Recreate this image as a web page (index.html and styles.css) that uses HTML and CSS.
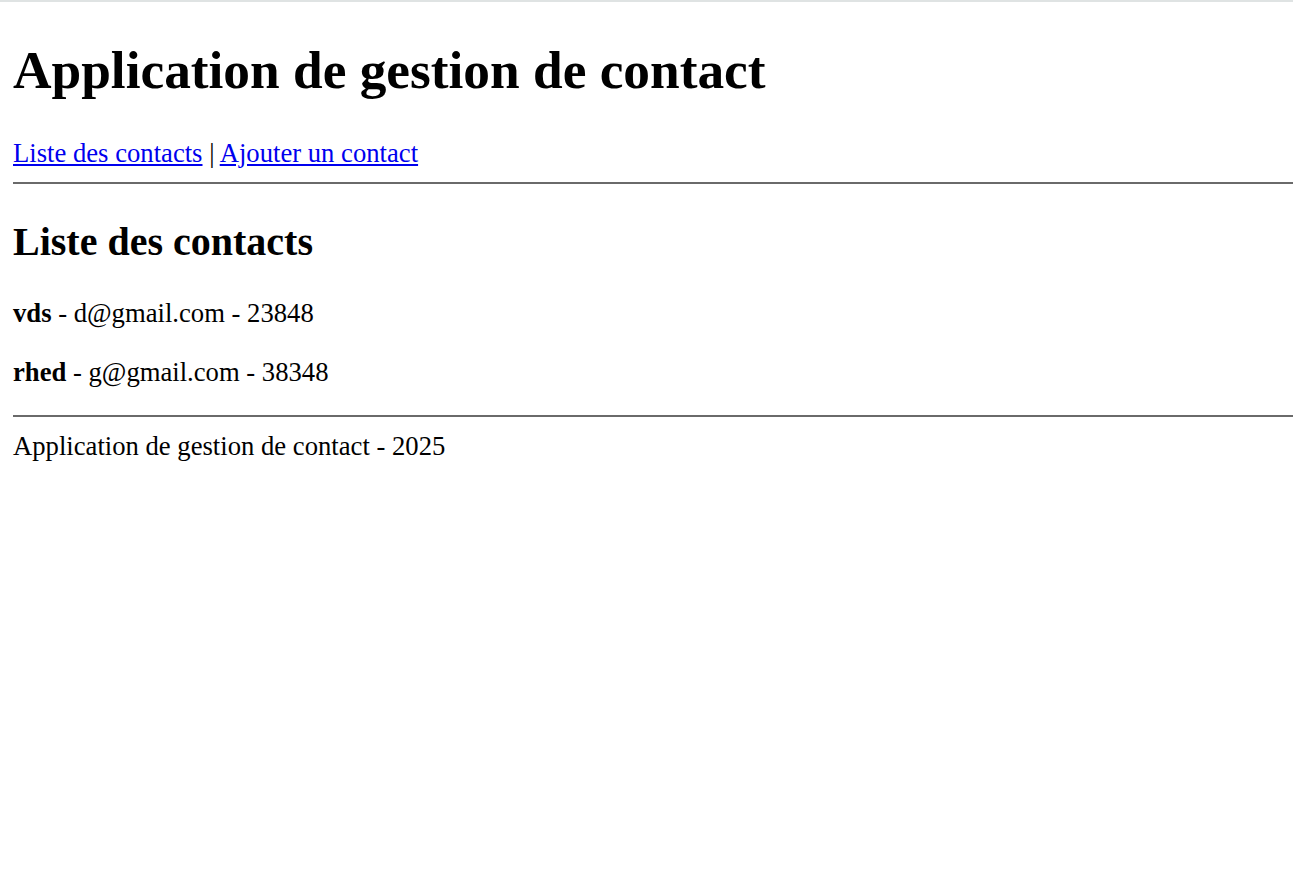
FILE: index.html
```html
<!DOCTYPE html>
<html lang="fr">
<head>
<meta charset="utf-8">
<title>Application de gestion de contact</title>
<link rel="stylesheet" href="styles.css">
</head>
<body>
<div class="topline"></div>
<div class="page">
  <header>
    <h1 class="title">Application de gestion de contact</h1>
    <nav class="nav"><a href="#">Liste des contacts</a> | <a href="#">Ajouter un contact</a></nav>
    <hr class="rule rule-top">
  </header>
  <main>
    <h2 class="subtitle">Liste des contacts</h2>
    <p class="contact"><strong>vds</strong> - d@gmail.com - 23848</p>
    <p class="contact"><strong>rhed</strong> - g@gmail.com - 38348</p>
  </main>
  <footer>
    <hr class="rule rule-bottom">
    <p class="foot">Application de gestion de contact - 2025</p>
  </footer>
</div>
</body>
</html>
```

FILE: styles.css
```css
html, body {
  margin: 0;
  padding: 0;
  background: #fff;
}
body {
  font-family: "Liberation Serif", "Times New Roman", serif;
  font-size: 26.67px;
  color: #000;
}
.topline {
  height: 2px;
  background: #dfe3e3;
}
.page {
  padding: 0 0 12px 13px;
}
.title {
  font-size: 53.33px;
  font-weight: bold;
  margin: 0;
  padding-top: 38px;
  line-height: 61px;
}
.nav {
  margin: 37px 0 0;
  line-height: 31px;
}
.nav a {
  color: #0000ee;
  text-decoration: underline;
}
.rule {
  border: 0;
  height: 2px;
  background: #6a6a6a;
}
.rule-top {
  margin: 13px 0 0;
}
.subtitle {
  font-size: 40px;
  font-weight: bold;
  margin: 35px 0 0;
  line-height: 46px;
}
.contact {
  margin: 33px 0 0;
  line-height: 31px;
}
.contact + .contact {
  margin-top: 28px;
}
.rule-bottom {
  margin: 27px 0 0;
}
.foot {
  margin: 14px 0 0;
  line-height: 31px;
}
```
